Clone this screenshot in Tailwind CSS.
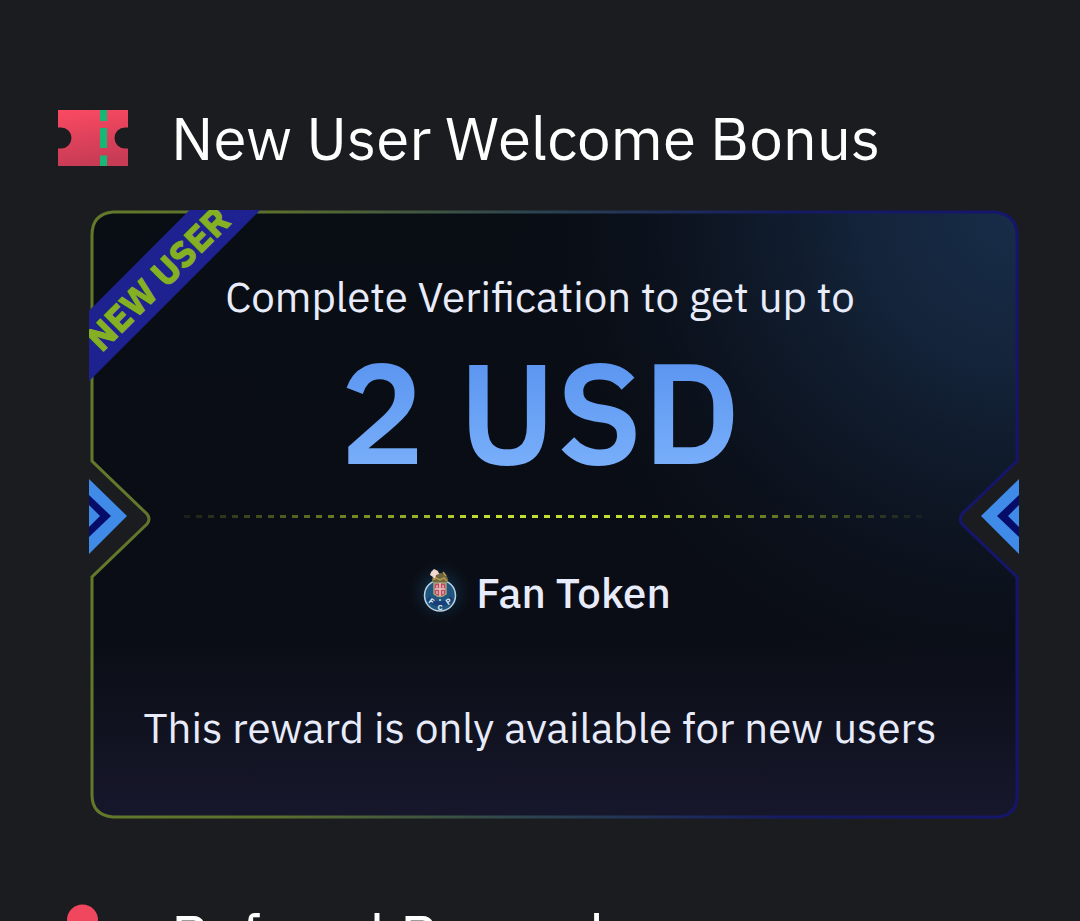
<!DOCTYPE html>
<html lang="en">
<head>
    <meta charset="UTF-8">
    <meta name="viewport" content="width=device-width, initial-scale=1.0">
    <title>Rewards</title>

    <!-- Tailwind CSS -->
    <script src="https://cdn.jsdelivr.net/npm/@tailwindcss/browser@4"></script>
</head>
<body class="bg-[#1b1c20] text-white font-['IBM_Plex_Sans','Roboto',sans-serif]">

    <main class="h-screen overflow-hidden pt-[98px]">

        <!-- New user bonus -->
        <section>
            <header class="flex items-center pl-[58px]">
                <svg class="w-[70px] h-14 shrink-0" viewBox="0 0 70 56" aria-hidden="true">
                    <defs>
                        <linearGradient id="ticket" x1="0" y1="0" x2="0.2" y2="1">
                            <stop offset="0" stop-color="#fb4a62"/>
                            <stop offset="1" stop-color="#c83b55"/>
                        </linearGradient>
                    </defs>
                    <path fill="url(#ticket)" d="M0 0H70V17.500H67A10.500 10.500 0 0 0 67 38.500H70V56H0V38.500H3A10.500 10.500 0 0 0 3 17.500H0Z"/>
                    <path fill="#16b877" d="M42 0h7v11h-7zM42 18h7v20h-7zM42 45.500h7V56h-7z"/>
                </svg>
                <h2 class="ml-[43px] text-[60px] leading-20 whitespace-nowrap">New User Welcome Bonus</h2>
            </header>

            <!-- Bonus card -->
            <div class="relative mt-8 ml-[89px] mr-[61px] h-[609px] overflow-hidden">
                <!-- Card outline with the side notches -->
                <svg class="absolute inset-0 w-full h-full" viewBox="0 0 930 609" preserveAspectRatio="none" aria-hidden="true">
                    <defs>
                        <linearGradient id="edge" x1="0" y1="0" x2="1" y2="0">
                            <stop offset="0" stop-color="#63792a"/>
                            <stop offset="0.2" stop-color="#5b6f2e"/>
                            <stop offset="0.48" stop-color="#2b4350"/>
                            <stop offset="0.75" stop-color="#151b62"/>
                            <stop offset="1" stop-color="#15156c"/>
                        </linearGradient>
                        <linearGradient id="base" x1="0" y1="0" x2="0" y2="1">
                            <stop offset="0" stop-color="#090d14"/>
                            <stop offset="0.7" stop-color="#0a0d15"/>
                            <stop offset="0.84" stop-color="#10121f"/>
                            <stop offset="1" stop-color="#17172c"/>
                        </linearGradient>
                        <radialGradient id="glow" gradientUnits="userSpaceOnUse" cx="930" cy="0" r="500">
                            <stop offset="0" stop-color="#182d49"/>
                            <stop offset="0.3" stop-color="#15273f" stop-opacity="0.9"/>
                            <stop offset="0.6" stop-color="#111d30" stop-opacity="0.6"/>
                            <stop offset="1" stop-color="#0c121e" stop-opacity="0"/>
                        </radialGradient>
                        <path id="shape" d="M24 2H906Q928 5 928 25V251L873 304Q870 309 873 314L928 367V585Q928 607 906 607H24Q3 605 3 585V367L58 314Q62 309 58 304L3 251V25Q3 4 24 2Z"/>
                    </defs>
                    <use href="#shape" fill="url(#base)"/>
                    <use href="#shape" fill="url(#glow)" stroke="url(#edge)" stroke-width="3"/>
                </svg>

                <!-- Side arrows -->
                <svg class="absolute left-0 top-[268px] w-[39px] h-[76px]" viewBox="0 0 39 76" aria-hidden="true">
                    <path fill="#408ae8" d="M0 1 38 38 0 76Z"/>
                    <path fill="#050d69" d="M0 17 22 38 0 59Z"/>
                    <path fill="#408ae8" d="M0 27 11 38 0 49Z"/>
                </svg>
                <svg class="absolute right-0 top-[268px] w-[39px] h-[76px] -scale-x-100" viewBox="0 0 39 76" aria-hidden="true">
                    <path fill="#408ae8" d="M0 1 38 38 0 76Z"/>
                    <path fill="#050d69" d="M0 17 22 38 0 59Z"/>
                    <path fill="#408ae8" d="M0 27 11 38 0 49Z"/>
                </svg>

                <!-- Ribbon -->
                <div class="absolute -left-[62px] top-[43px] w-[260px] h-[50px] -rotate-45 bg-[#1d2290] text-center text-[36px] leading-[52px] font-bold text-[#86b023] [-webkit-text-stroke:1px_#86b023]">NEW USER</div>

                <!-- Card text -->
                <div class="relative flex flex-col items-center whitespace-nowrap text-[#e8ecfa]">
                    <p class="mt-[57px] mr-7 text-[42px] leading-[60px]">Complete Verification to get up to</p>
                    <p class="mt-3 mr-7 text-[142px] leading-[144px] font-semibold bg-linear-to-b from-[#5590ee] to-[#7db2fb] bg-clip-text text-transparent">2 USD</p>
                    <svg class="mt-8 w-[740px] max-w-full h-[3px]" viewBox="0 0 740 3" aria-hidden="true">
                        <defs>
                            <linearGradient id="dash" gradientUnits="userSpaceOnUse" x1="0" y1="0" x2="740" y2="0">
                                <stop offset="0" stop-color="#a9c62c" stop-opacity="0.1"/>
                                <stop offset="0.4" stop-color="#c2de30"/>
                                <stop offset="0.6" stop-color="#c2de30"/>
                                <stop offset="1" stop-color="#a9c62c" stop-opacity="0.05"/>
                            </linearGradient>
                        </defs>
                        <path d="M0 1.500H740" stroke="url(#dash)" stroke-width="3" stroke-dasharray="6 6"/>
                    </svg>
                    <div class="mt-[43px] mr-7 flex items-center">
                        <svg class="w-16 h-16" viewBox="0 0 64 64" aria-hidden="true">
                            <defs>
                                <radialGradient id="halo">
                                    <stop offset="0.4" stop-color="#10263a"/>
                                    <stop offset="1" stop-color="#0c1826" stop-opacity="0"/>
                                </radialGradient>
                            </defs>
                            <circle cx="31" cy="31" r="31" fill="url(#halo)"/>
                            <circle cx="31" cy="34.500" r="15.500" fill="#1f5680" stroke="#b9d2e0" stroke-width="1.500"/>
                            <path d="M19 37Q31 49 43 37" fill="none" stroke="#183f78" stroke-width="5"/>
                            <path d="M23 20Q23 11 31 12Q39 12 39 20L36 23H26Z" fill="#6e6741"/>
                            <path d="M22 11l3-3 4 2 1 3-3 1-1 5-2-3-3-2z" fill="#f1d9cf"/>
                            <path d="M24 19l3-2 4 2 4-2 3 3M34 11l3 4" fill="none" stroke="#b99a4c" stroke-width="1.500"/>
                            <path d="M25 22H37V33Q31 38 25 33Z" fill="#c14c60" stroke="#a7a17a" stroke-width="1.500"/>
                            <path d="M31 22V35M26 28H36" stroke="#ecc7c9" stroke-width="1.500"/>
                            <path d="M28 24v3M34 24v3M28 30v3M34 30v3" stroke="#f1dedf" stroke-width="1"/>
                            <g fill="#d8e5ec" class="text-[8px] font-bold" text-anchor="middle">
                                <text x="22" y="43" transform="rotate(35 22 41)">F</text>
                                <text x="31" y="49">C</text>
                                <text x="40" y="43" transform="rotate(-35 40 41)">P</text>
                            </g>
                            <circle cx="31" cy="39" r="1" fill="#c2d7df"/>
                        </svg>
                        <p class="ml-[3px] text-[42px] leading-[60px] font-medium">Fan Token</p>
                    </div>
                    <p class="mt-[73px] mr-7 text-[42px] leading-[60px]">This reward is only available for new users</p>
                </div>
            </div>
        </section>

        <!-- Referral rewards -->
        <section class="mt-[77px]">
            <header class="flex items-center pl-[58px]">
                <svg class="w-[70px] h-16 shrink-0" viewBox="0 0 70 64" aria-hidden="true">
                    <ellipse cx="24.500" cy="16" rx="15.500" ry="15.500" fill="#f0475f"/>
                    <path d="M0 64Q0 38 24.500 38T49 64Z" fill="#f0475f"/>
                </svg>
                <h2 class="ml-[43px] text-[60px] leading-20 whitespace-nowrap">Referral Rewards</h2>
            </header>
        </section>
    </main>

</body>
</html>
